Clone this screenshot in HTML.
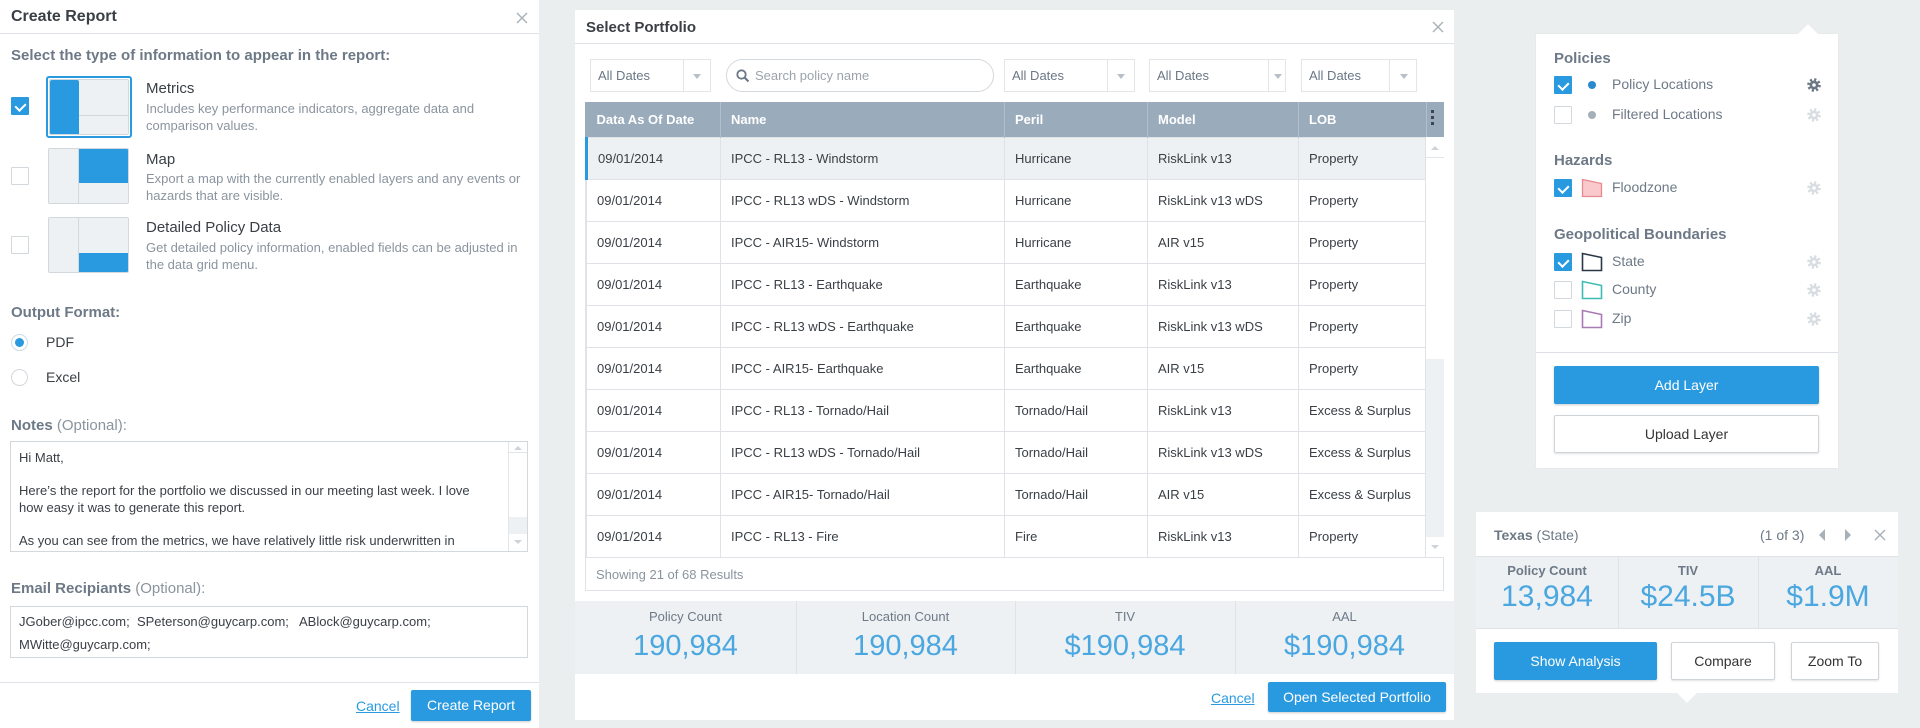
<!DOCTYPE html>
<html><head><meta charset="utf-8"><style>
*{margin:0;padding:0;box-sizing:border-box}
body{width:1920px;height:728px;background:#ebeeef;font-family:"Liberation Sans",sans-serif;color:#3a3f45;position:relative;overflow:hidden;font-size:13px}
.a{position:absolute}
.w{background:#fff}
.cb{position:absolute;width:18px;height:18px;border:1px solid #d3d8dd;background:#fff;border-radius:1px}
.cb.on{background:#2a9ae0;border-color:#2a9ae0}
.cb.on:after{content:"";position:absolute;left:5px;top:3px;width:5px;height:8px;border:solid #fff;border-width:0 2px 2px 0;transform:rotate(45deg)}
.lbl{color:#6d7986;font-weight:bold;font-size:15px}
.thumb{position:absolute;border:1px solid #d3d8dd;background:#eef1f4;border-radius:2px;overflow:hidden}
.blue{background:#2a9ae0;position:absolute}
.dd{position:absolute;height:33px;border:1px solid #e3e6e9;color:#6b7785;font-size:13px;line-height:31px;padding-left:7px;background:#fff}
.dd .dv{position:absolute;top:0;bottom:0;border-left:1px solid #e3e6e9}
.dd .ar{position:absolute;top:14px;width:0;height:0;border-left:4px solid transparent;border-right:4px solid transparent;border-top:5px solid #b8bfc6}
table{border-collapse:collapse;table-layout:fixed;font-size:13px}
td{height:42px;border:1px solid #dfe3e7;padding-left:10px;white-space:nowrap;overflow:hidden}
th{height:35px;background:#9aabbc;color:#fff;text-align:left;padding-left:10px;font-size:13px;border-right:1px solid #b3c0cc}
.stat{position:absolute;text-align:center;color:#6d7986;font-weight:bold;font-size:13px}
.num{color:#4aa7e0;font-size:29px;font-weight:300;margin-top:6px}
.btn{position:absolute;background:#2a9ae0;color:#fff;text-align:center;font-size:14px;border-radius:2px;box-shadow:0 1px 2px rgba(0,0,0,.2)}
.btnw{position:absolute;background:#fff;color:#333;text-align:center;font-size:14px;border:1px solid #cfd4d9;border-radius:2px;box-shadow:0 1px 2px rgba(0,0,0,.12)}
.row{position:absolute;left:1554px;width:270px;height:20px;font-size:14px;color:#6d7986}
.row span{position:absolute;left:58px;top:1px}
.gear{position:absolute;left:252px;top:2px}
</style></head><body>

<div class="a w" style="left:0;top:0;width:539px;height:728px"></div>
<div class="a" style="left:11px;top:8px;font-size:16px;font-weight:bold;color:#3a3f45">Create Report</div>
<svg class="a" style="left:516px;top:12px" width="12" height="12"><path d="M1 1L11 11M11 1L1 11" stroke="#a8b0b8" stroke-width="1.4"/></svg>
<div class="a" style="left:0;top:33px;width:539px;border-top:1px solid #dfe3e7"></div>
<div class="a lbl" style="left:11px;top:47px">Select the type of information to appear in the report:</div>

<div class="cb on" style="left:11px;top:97px"></div>
<div class="a" style="left:46px;top:76px;width:86px;height:62px;border:2px solid #2a9ae0;border-radius:3px"></div>
<div class="thumb" style="left:49px;top:79px;width:80px;height:56px"><div class="blue" style="left:0;top:0;width:29px;height:56px;border-radius:2px"></div><div class="a" style="left:29px;top:35px;width:51px;border-top:1px solid #d3d8dd"></div></div>
<div class="a" style="left:146px;top:80px;font-size:15px;color:#3a3f45">Metrics</div>
<div class="a" style="left:146px;top:100px;font-size:13px;color:#8a949e;line-height:17px;width:370px">Includes key performance indicators, aggregate data and comparison values.</div>

<div class="cb" style="left:11px;top:167px"></div>
<div class="thumb" style="left:48px;top:148px;width:81px;height:56px"><div class="blue" style="left:30px;top:0;width:51px;height:34px"></div><div class="a" style="left:29px;top:0;height:56px;border-left:1px solid #d3d8dd"></div></div>
<div class="a" style="left:146px;top:151px;font-size:15px">Map</div>
<div class="a" style="left:146px;top:170px;font-size:13px;color:#8a949e;line-height:17px;width:380px">Export a map with the currently enabled layers and any events or hazards that are visible.</div>

<div class="cb" style="left:11px;top:236px"></div>
<div class="thumb" style="left:48px;top:217px;width:81px;height:56px"><div class="blue" style="left:30px;top:35px;width:51px;height:21px"></div><div class="a" style="left:29px;top:0;height:56px;border-left:1px solid #d3d8dd"></div></div>
<div class="a" style="left:146px;top:219px;font-size:15px">Detailed Policy Data</div>
<div class="a" style="left:146px;top:239px;font-size:13px;color:#8a949e;line-height:17px;width:380px">Get detailed policy information, enabled fields can be adjusted in the data grid menu.</div>

<div class="a lbl" style="left:11px;top:304px">Output Format:</div>
<div class="a" style="left:11px;top:334px;width:17px;height:17px;border-radius:50%;border:1px solid #c9dcea;background:#fff"><div class="a" style="left:3px;top:3px;width:9px;height:9px;border-radius:50%;background:#2a9ae0"></div></div>
<div class="a" style="left:46px;top:334px;font-size:14px">PDF</div>
<div class="a" style="left:11px;top:369px;width:17px;height:17px;border-radius:50%;border:1px solid #d3d8dd;background:#fff"></div>
<div class="a" style="left:46px;top:369px;font-size:14px">Excel</div>

<div class="a lbl" style="left:11px;top:417px">Notes <span style="font-weight:normal;color:#8a949e">(Optional):</span></div>
<div class="a" style="left:10px;top:441px;width:518px;height:111px;border:1px solid #d3d8dd;overflow:hidden">
 <div class="a" style="left:8px;top:8px;font-size:13px;line-height:16.5px;width:462px;color:#3a3f45">Hi Matt,<br><br>Here’s the report for the portfolio we discussed in our meeting last week. I love how easy it was to generate this report.<br><br>As you can see from the metrics, we have relatively little risk underwritten in</div>
 <div class="a" style="right:0;top:0;width:19px;height:109px;border-left:1px solid #e3e6e9;background:#fff"><div class="a" style="left:0;top:10px;width:18px;border-top:1px solid #e3e6e9"></div><div class="a" style="left:0;top:75px;width:18px;height:17px;background:#eef1f4"></div>
 <div class="a" style="left:5px;top:4px;border-left:4px solid transparent;border-right:4px solid transparent;border-bottom:4px solid #cdd3d8"></div>
 <div class="a" style="left:5px;top:98px;border-left:4px solid transparent;border-right:4px solid transparent;border-top:4px solid #cdd3d8"></div></div>
</div>
<div class="a lbl" style="left:11px;top:580px">Email Recipiants <span style="font-weight:normal;color:#8a949e">(Optional):</span></div>
<div class="a" style="left:10px;top:606px;width:518px;height:52px;border:1px solid #d3d8dd;font-size:13px;line-height:23px;padding:3px 8px">JGober@ipcc.com;&nbsp; SPeterson@guycarp.com; &nbsp; ABlock@guycarp.com;<br>MWitte@guycarp.com;</div>
<div class="a" style="left:0;top:682px;width:539px;border-top:1px solid #dfe3e7"></div>
<div class="a" style="left:356px;top:698px;font-size:14px;color:#2a9ae0;text-decoration:underline">Cancel</div>
<div class="btn" style="left:411px;top:690px;width:120px;height:31px;line-height:31px">Create Report</div>

<div class="a w" style="left:575px;top:10px;width:879px;height:710px"></div>
<div class="a" style="left:586px;top:19px;font-size:15px;font-weight:bold;color:#3a3f45">Select Portfolio</div>
<svg class="a" style="left:1432px;top:21px" width="12" height="12"><path d="M1 1L11 11M11 1L1 11" stroke="#a8b0b8" stroke-width="1.4"/></svg>
<div class="a" style="left:575px;top:43px;width:879px;border-top:1px solid #dfe3e7"></div>

<div class="dd" style="left:590px;top:59px;width:121px">All Dates<div class="dv" style="left:92px"></div><div class="ar" style="left:102px"></div></div>
<div class="a" style="left:726px;top:59px;width:268px;height:33px;border:1px solid #d3d8dd;border-radius:17px;color:#9aa3ac;font-size:13px;line-height:31px;padding-left:28px">Search policy name
 <svg class="a" style="left:9px;top:9px" width="14" height="14"><circle cx="5.5" cy="5.5" r="4.2" fill="none" stroke="#6b7785" stroke-width="1.8"/><path d="M8.5 8.5L12.5 12.5" stroke="#6b7785" stroke-width="2"/></svg></div>
<div class="dd" style="left:1004px;top:59px;width:131px">All Dates<div class="dv" style="left:102px"></div><div class="ar" style="left:112px"></div></div>
<div class="dd" style="left:1149px;top:59px;width:137px">All Dates<div class="dv" style="left:118px"></div><div class="ar" style="left:124px"></div></div>
<div class="dd" style="left:1301px;top:59px;width:116px">All Dates<div class="dv" style="left:87px"></div><div class="ar" style="left:98px"></div></div>

<div class="a" style="left:585px;top:102px;width:859px;height:489px;border:1px solid #dfe3e7"></div>
<div class="a" style="left:585px;top:102px;width:859px;height:35px;background:#9aabbc"></div>
<table class="a" style="left:585px;top:102px;width:840px">
<colgroup><col style="width:134px"><col style="width:284px"><col style="width:143px"><col style="width:151px"><col style="width:128px"></colgroup>
<tr><th>Data As Of Date</th><th>Name</th><th>Peril</th><th>Model</th><th>LOB</th></tr>
<tr style="background:#eef1f4"><td style="border-left:3px solid #2a9ae0">09/01/2014</td><td>IPCC - RL13 - Windstorm</td><td>Hurricane</td><td>RiskLink v13</td><td>Property</td></tr>
<tr><td>09/01/2014</td><td>IPCC - RL13 wDS - Windstorm</td><td>Hurricane</td><td>RiskLink v13 wDS</td><td>Property</td></tr>
<tr><td>09/01/2014</td><td>IPCC - AIR15- Windstorm</td><td>Hurricane</td><td>AIR v15</td><td>Property</td></tr>
<tr><td>09/01/2014</td><td>IPCC - RL13 - Earthquake</td><td>Earthquake</td><td>RiskLink v13</td><td>Property</td></tr>
<tr><td>09/01/2014</td><td>IPCC - RL13 wDS - Earthquake</td><td>Earthquake</td><td>RiskLink v13 wDS</td><td>Property</td></tr>
<tr><td>09/01/2014</td><td>IPCC - AIR15- Earthquake</td><td>Earthquake</td><td>AIR v15</td><td>Property</td></tr>
<tr><td>09/01/2014</td><td>IPCC - RL13 - Tornado/Hail</td><td>Tornado/Hail</td><td>RiskLink v13</td><td>Excess &amp; Surplus</td></tr>
<tr><td>09/01/2014</td><td>IPCC - RL13 wDS - Tornado/Hail</td><td>Tornado/Hail</td><td>RiskLink v13 wDS</td><td>Excess &amp; Surplus</td></tr>
<tr><td>09/01/2014</td><td>IPCC - AIR15- Tornado/Hail</td><td>Tornado/Hail</td><td>AIR v15</td><td>Excess &amp; Surplus</td></tr>
<tr><td>09/01/2014</td><td>IPCC - RL13 - Fire</td><td>Fire</td><td>RiskLink v13</td><td>Property</td></tr>
</table>
<div class="a" style="left:1431px;top:110px;width:3px;height:3px;background:#3d4650;box-shadow:0 6px 0 #3d4650,0 12px 0 #3d4650"></div>
<div class="a" style="left:1425px;top:137px;width:19px;height:420px;background:#fff;border-left:1px solid #dfe3e7">
 <div class="a" style="left:5px;top:9px;border-left:4px solid transparent;border-right:4px solid transparent;border-bottom:4px solid #cdd3d8"></div>
 <div class="a" style="left:0;top:20px;width:18px;border-top:1px solid #e3e6e9"></div>
 <div class="a" style="left:0;top:222px;width:18px;height:178px;background:#eef1f4"></div>
 <div class="a" style="left:5px;top:408px;border-left:4px solid transparent;border-right:4px solid transparent;border-top:4px solid #cdd3d8"></div>
</div>
<div class="a" style="left:585px;top:557px;width:859px;border-top:1px solid #dfe3e7"></div>
<div class="a" style="left:596px;top:567px;font-size:13px;color:#8a949e">Showing 21 of 68 Results</div>

<div class="a" style="left:575px;top:601px;width:879px;height:73px;background:#eef1f4"></div>
<div class="a" style="left:796px;top:601px;height:73px;border-left:1px solid #dfe3e7"></div>
<div class="a" style="left:1015px;top:601px;height:73px;border-left:1px solid #dfe3e7"></div>
<div class="a" style="left:1235px;top:601px;height:73px;border-left:1px solid #dfe3e7"></div>
<div class="stat" style="left:575px;top:609px;width:221px;font-weight:normal">Policy Count<div class="num">190,984</div></div>
<div class="stat" style="left:796px;top:609px;width:219px;font-weight:normal">Location Count<div class="num">190,984</div></div>
<div class="stat" style="left:1015px;top:609px;width:220px;font-weight:normal">TIV<div class="num">$190,984</div></div>
<div class="stat" style="left:1235px;top:609px;width:219px;font-weight:normal">AAL<div class="num">$190,984</div></div>
<div class="a" style="left:1211px;top:690px;font-size:14px;color:#2a9ae0;text-decoration:underline">Cancel</div>
<div class="btn" style="left:1268px;top:682px;width:178px;height:30px;line-height:30px">Open Selected Portfolio</div>

<div class="a w" style="left:1536px;top:34px;width:302px;height:434px;box-shadow:0 0 2px rgba(0,0,0,.05)"></div>
<div class="a" style="left:1801px;top:27px;width:14px;height:14px;background:#fff;transform:rotate(45deg)"></div>
<div class="a lbl" style="left:1554px;top:50px">Policies</div>
<div class="row" style="top:75px"><div class="cb on" style="left:0;top:1px"></div><div class="a" style="left:34px;top:6px;width:8px;height:8px;border-radius:50%;background:#2a8ad0"></div><span>Policy Locations</span>
 <svg class="gear" width="16" height="16" viewBox="0 0 16 16"><circle cx="8" cy="8" r="5.3" fill="none" stroke="#6b7785" stroke-width="3" stroke-dasharray="2.1 2.06"/><circle cx="8" cy="8" r="4.5" fill="#6b7785"/><circle cx="8" cy="8" r="1.8" fill="#fff"/></svg></div>
<div class="row" style="top:105px"><div class="cb" style="left:0;top:1px"></div><div class="a" style="left:34px;top:6px;width:8px;height:8px;border-radius:50%;background:#a6b0ba"></div><span>Filtered Locations</span>
 <svg class="gear" width="16" height="16" viewBox="0 0 16 16"><circle cx="8" cy="8" r="5.3" fill="none" stroke="#d8dde2" stroke-width="3" stroke-dasharray="2.1 2.06"/><circle cx="8" cy="8" r="4.5" fill="#d8dde2"/><circle cx="8" cy="8" r="1.8" fill="#fff"/></svg></div>
<div class="a lbl" style="left:1554px;top:152px">Hazards</div>
<div class="row" style="top:178px"><div class="cb on" style="left:0;top:1px"></div><svg class="a" style="left:27px;top:0" width="22" height="20"><path d="M1.5 1.5L20.5 5.5V18.5H1.5Z" fill="#f9c9cc" stroke="#e88a90" stroke-width="1.3"/></svg><span>Floodzone</span>
 <svg class="gear" width="16" height="16" viewBox="0 0 16 16"><circle cx="8" cy="8" r="5.3" fill="none" stroke="#d8dde2" stroke-width="3" stroke-dasharray="2.1 2.06"/><circle cx="8" cy="8" r="4.5" fill="#d8dde2"/><circle cx="8" cy="8" r="1.8" fill="#fff"/></svg></div>
<div class="a lbl" style="left:1554px;top:226px">Geopolitical Boundaries</div>
<div class="row" style="top:252px"><div class="cb on" style="left:0;top:1px"></div><svg class="a" style="left:27px;top:0" width="22" height="20"><path d="M1.5 1.5L20.5 5.5V18.5H1.5Z" fill="none" stroke="#2c3747" stroke-width="1.6"/></svg><span>State</span>
 <svg class="gear" width="16" height="16" viewBox="0 0 16 16"><circle cx="8" cy="8" r="5.3" fill="none" stroke="#d8dde2" stroke-width="3" stroke-dasharray="2.1 2.06"/><circle cx="8" cy="8" r="4.5" fill="#d8dde2"/><circle cx="8" cy="8" r="1.8" fill="#fff"/></svg></div>
<div class="row" style="top:280px"><div class="cb" style="left:0;top:1px"></div><svg class="a" style="left:27px;top:0" width="22" height="20"><path d="M1.5 1.5L20.5 5.5V18.5H1.5Z" fill="none" stroke="#3fbdb4" stroke-width="1.6"/></svg><span>County</span>
 <svg class="gear" width="16" height="16" viewBox="0 0 16 16"><circle cx="8" cy="8" r="5.3" fill="none" stroke="#d8dde2" stroke-width="3" stroke-dasharray="2.1 2.06"/><circle cx="8" cy="8" r="4.5" fill="#d8dde2"/><circle cx="8" cy="8" r="1.8" fill="#fff"/></svg></div>
<div class="row" style="top:309px"><div class="cb" style="left:0;top:1px"></div><svg class="a" style="left:27px;top:0" width="22" height="20"><path d="M1.5 1.5L20.5 5.5V18.5H1.5Z" fill="none" stroke="#a97bb5" stroke-width="1.6"/></svg><span>Zip</span>
 <svg class="gear" width="16" height="16" viewBox="0 0 16 16"><circle cx="8" cy="8" r="5.3" fill="none" stroke="#d8dde2" stroke-width="3" stroke-dasharray="2.1 2.06"/><circle cx="8" cy="8" r="4.5" fill="#d8dde2"/><circle cx="8" cy="8" r="1.8" fill="#fff"/></svg></div>
<div class="a" style="left:1536px;top:352px;width:302px;border-top:1px solid #dcdfe6"></div>
<div class="btn" style="left:1554px;top:366px;width:265px;height:38px;line-height:38px">Add Layer</div>
<div class="btnw" style="left:1554px;top:415px;width:265px;height:38px;line-height:36px">Upload Layer</div>

<div class="a w" style="left:1476px;top:512px;width:422px;height:181px"></div>
<div class="a" style="left:1680px;top:686px;width:14px;height:14px;background:#fff;transform:rotate(45deg)"></div>
<div class="a" style="left:1494px;top:527px;font-size:14px;color:#6d7986"><b>Texas</b> (State)</div>
<div class="a" style="left:1760px;top:527px;font-size:14px;color:#6d7986">(1 of 3)</div>
<div class="a" style="left:1819px;top:529px;border-top:6px solid transparent;border-bottom:6px solid transparent;border-right:6px solid #a8b0b8"></div>
<div class="a" style="left:1845px;top:529px;border-top:6px solid transparent;border-bottom:6px solid transparent;border-left:6px solid #a8b0b8"></div>
<svg class="a" style="left:1874px;top:529px" width="12" height="12"><path d="M1 1L11 11M11 1L1 11" stroke="#a8b0b8" stroke-width="1.4"/></svg>
<div class="a" style="left:1476px;top:556px;width:422px;height:73px;background:#eef1f4;border-top:1px solid #dfe3e7;border-bottom:1px solid #dfe3e7"></div>
<div class="a" style="left:1618px;top:556px;height:73px;border-left:1px solid #dfe3e7"></div>
<div class="a" style="left:1758px;top:556px;height:73px;border-left:1px solid #dfe3e7"></div>
<div class="stat" style="left:1476px;top:563px;width:142px">Policy Count<div class="num" style="margin-top:2px;font-size:30px">13,984</div></div>
<div class="stat" style="left:1618px;top:563px;width:140px">TIV<div class="num" style="margin-top:2px;font-size:30px">$24.5B</div></div>
<div class="stat" style="left:1758px;top:563px;width:140px">AAL<div class="num" style="margin-top:2px;font-size:30px">$1.9M</div></div>
<div class="btn" style="left:1494px;top:642px;width:163px;height:38px;line-height:38px">Show Analysis</div>
<div class="btnw" style="left:1671px;top:642px;width:104px;height:38px;line-height:36px">Compare</div>
<div class="btnw" style="left:1791px;top:642px;width:88px;height:38px;line-height:36px">Zoom To</div>
</body></html>
